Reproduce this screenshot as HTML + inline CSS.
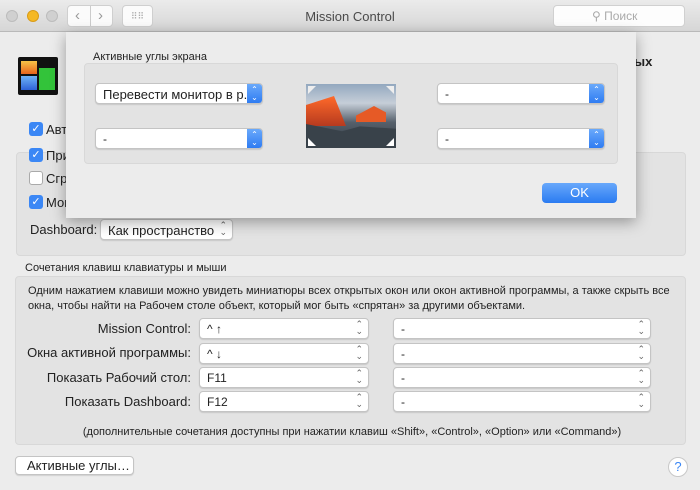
<html><head><style>
*{box-sizing:border-box;margin:0;padding:0}
body{width:700px;height:490px;overflow:hidden;background:#ececec;font-family:"Liberation Sans",sans-serif;font-size:12px;color:#222;position:relative}
.a{position:absolute}
.pop{position:absolute;background:#fff;border:1px solid #c4c4c4;border-radius:4px;height:21px;font-size:12px;padding:3px 7px;box-shadow:0 1px 1px rgba(0,0,0,.12);white-space:nowrap;overflow:hidden}
.pop .ar{position:absolute;right:5px;top:2px;color:#666;font-size:9px;line-height:7px;text-align:center}
.pop.blue .bl{position:absolute;right:0;top:0;width:15px;height:100%;background:linear-gradient(#6aa9fb,#2f7cf2);color:#fff;font-size:8px;line-height:8px;text-align:center;padding-top:2px}
.cb{position:absolute;width:14px;height:14px;border-radius:3px;background:#3b87f5;color:#fff;font-size:11px;line-height:14px;text-align:center}
.grp{position:absolute;background:#e3e3e3;border:1px solid #d8d8d8;border-radius:4px}
.lab{position:absolute;text-align:right;width:180px;font-size:13px}
</style></head><body>
<div class="a" style="left:0;top:0;width:700px;height:32px;background:linear-gradient(#ebebeb,#d6d6d6);border-bottom:1px solid #b9b9b9"></div>
<div class="a" style="left:6px;top:10px;width:12px;height:12px;border-radius:6px;background:#d0d0d0;border:1px solid #bcbcbc"></div>
<div class="a" style="left:27px;top:10px;width:12px;height:12px;border-radius:6px;background:#f5b824;border:1px solid #d99c18"></div>
<div class="a" style="left:46px;top:10px;width:12px;height:12px;border-radius:6px;background:#d0d0d0;border:1px solid #bcbcbc"></div>
<div class="a" style="left:67px;top:5px;width:46px;height:22px;background:#fbfbfb;border:1px solid #cfcfcf;border-radius:4px;color:#999;font-size:15px;line-height:20px"><span style="position:absolute;left:7px">‹</span><span style="position:absolute;left:22px;top:0;height:20px;border-left:1px solid #ccc"></span><span style="position:absolute;left:30px">›</span></div>
<div class="a" style="left:122px;top:5px;width:31px;height:22px;background:#fbfbfb;border:1px solid #cfcfcf;border-radius:4px;color:#aaa;font-size:9px;text-align:center;line-height:20px">⠿⠿</div>
<div class="a" style="left:0;width:700px;top:9px;text-align:center;font-size:13px;color:#4a4a4a">Mission Control</div>
<div class="a" style="left:553px;top:5px;width:132px;height:22px;background:#fdfdfd;border:1px solid #d0d0d0;border-radius:4px;color:#aaa;font-size:12px;padding:3px 0 0 38px">⚲ Поиск</div>

<div class="a" style="left:18px;top:57px;width:40px;height:38px;background:#111;border-radius:2px">
<div class="a" style="left:3px;top:4px;width:16px;height:13px;background:linear-gradient(#f6c347,#e8641c)"></div>
<div class="a" style="left:3px;top:19px;width:16px;height:14px;background:linear-gradient(#6fb3f5,#2e62d8)"></div>
<div class="a" style="left:21px;top:11px;width:16px;height:22px;background:#33c33a"></div></div>
<div class="a" style="left:634px;top:54px;font-size:13px;font-weight:bold">ых</div>

<div class="grp" style="left:16px;top:152px;width:670px;height:104px"></div>
<div class="cb" style="left:29px;top:122px">✓</div><div class="a" style="left:46px;top:122px;font-size:13px">Авт</div>
<div class="cb" style="left:29px;top:148px">✓</div><div class="a" style="left:46px;top:148px;font-size:13px">При</div>
<div class="a" style="left:29px;top:171px;width:14px;height:14px;border:1px solid #aaa;border-radius:3px;background:#fff"></div><div class="a" style="left:46px;top:171px;font-size:13px">Сгр</div>
<div class="cb" style="left:29px;top:195px">✓</div><div class="a" style="left:46px;top:195px;font-size:13px">Мон</div>
<div class="a" style="left:30px;top:222px;font-size:13px">Dashboard:</div>
<div class="pop" style="left:100px;top:219px;width:133px;font-size:13px">Как пространство<span class="ar">⌃<br>⌄</span></div>

<div class="a" style="left:25px;top:262px;font-size:11px">Сочетания клавиш клавиатуры и мыши</div>
<div class="grp" style="left:15px;top:276px;width:671px;height:169px"></div>
<div class="a" style="left:28px;top:284px;font-size:11px;line-height:15px;width:650px">Одним нажатием клавиши можно увидеть миниатюры всех открытых окон или окон активной программы, а также скрыть все окна, чтобы найти на Рабочем столе объект, который мог быть «спрятан» за другими объектами.</div>
<div class="lab" style="left:11px;top:321px">Mission Control:</div>
<div class="lab" style="left:11px;top:345px">Окна активной программы:</div>
<div class="lab" style="left:11px;top:370px">Показать Рабочий стол:</div>
<div class="lab" style="left:11px;top:394px">Показать Dashboard:</div>
<div class="pop" style="left:199px;top:318px;width:170px">^ ↑<span class="ar">⌃<br>⌄</span></div>
<div class="pop" style="left:199px;top:343px;width:170px">^ ↓<span class="ar">⌃<br>⌄</span></div>
<div class="pop" style="left:199px;top:367px;width:170px">F11<span class="ar">⌃<br>⌄</span></div>
<div class="pop" style="left:199px;top:391px;width:170px">F12<span class="ar">⌃<br>⌄</span></div>
<div class="pop" style="left:393px;top:318px;width:258px">-<span class="ar">⌃<br>⌄</span></div>
<div class="pop" style="left:393px;top:343px;width:258px">-<span class="ar">⌃<br>⌄</span></div>
<div class="pop" style="left:393px;top:367px;width:258px">-<span class="ar">⌃<br>⌄</span></div>
<div class="pop" style="left:393px;top:391px;width:258px">-<span class="ar">⌃<br>⌄</span></div>
<div class="a" style="left:0;width:700px;text-align:center;top:426px;font-size:11px;padding-left:4px">(дополнительные сочетания доступны при нажатии клавиш «Shift», «Control», «Option» или «Command»)</div>
<div class="pop" style="left:15px;top:456px;width:119px;height:19px;font-size:13px;padding:1px 11px">Активные углы…</div>
<div class="a" style="left:668px;top:457px;width:20px;height:20px;border-radius:10px;background:#fff;border:1px solid #c8c8c8;color:#3b87f5;text-align:center;font-size:13px;line-height:18px">?</div>

<div class="a" style="left:66px;top:32px;width:570px;height:186px;background:#ececec;box-shadow:0 4px 14px rgba(0,0,0,.35)">
<div class="a" style="left:27px;top:19px;font-size:11px">Активные углы экрана</div>
<div class="grp" style="left:18px;top:31px;width:534px;height:101px"></div>
<div class="pop blue" style="left:29px;top:51px;width:168px;font-size:13px">Перевести монитор в р...<span class="bl">⌃<br>⌄</span></div>
<div class="pop blue" style="left:29px;top:96px;width:168px">-<span class="bl">⌃<br>⌄</span></div>
<div class="pop blue" style="left:371px;top:51px;width:168px">-<span class="bl">⌃<br>⌄</span></div>
<div class="pop blue" style="left:371px;top:96px;width:168px">-<span class="bl">⌃<br>⌄</span></div>
<div class="a" style="left:240px;top:52px;width:90px;height:64px;background:linear-gradient(#93a8bf 0%,#c6ced8 30%,#56606b 60%,#2e3740 100%);overflow:hidden">
<div class="a" style="left:0;top:12px;width:40px;height:30px;background:linear-gradient(#ff6a2a,#b63a1f);clip-path:polygon(0 30%,70% 0,100% 100%,0 100%)"></div>
<div class="a" style="left:50px;top:22px;width:30px;height:16px;background:#e65a26;clip-path:polygon(0 60%,60% 0,100% 40%,100% 100%,0 100%)"></div>
<div class="a" style="left:0;top:40px;width:90px;height:24px;background:#39424a;clip-path:polygon(0 0,40% 30%,60% 10%,100% 20%,100% 100%,0 100%)"></div>
<div class="a" style="left:2px;top:54px;width:0;height:0;border-left:8px solid #fff;border-top:8px solid transparent"></div>
<div class="a" style="left:80px;top:54px;width:0;height:0;border-right:8px solid #fff;border-top:8px solid transparent"></div>
<div class="a" style="left:2px;top:2px;width:0;height:0;border-left:8px solid #eee;border-bottom:8px solid transparent"></div>
<div class="a" style="left:80px;top:2px;width:0;height:0;border-right:8px solid #eee;border-bottom:8px solid transparent"></div>
</div>
<div class="a" style="left:476px;top:151px;width:75px;height:20px;border-radius:4px;background:linear-gradient(#68a8fb,#2a7bf1);color:#fff;text-align:center;font-size:13px;line-height:20px">OK</div>
</div>
</body></html>
